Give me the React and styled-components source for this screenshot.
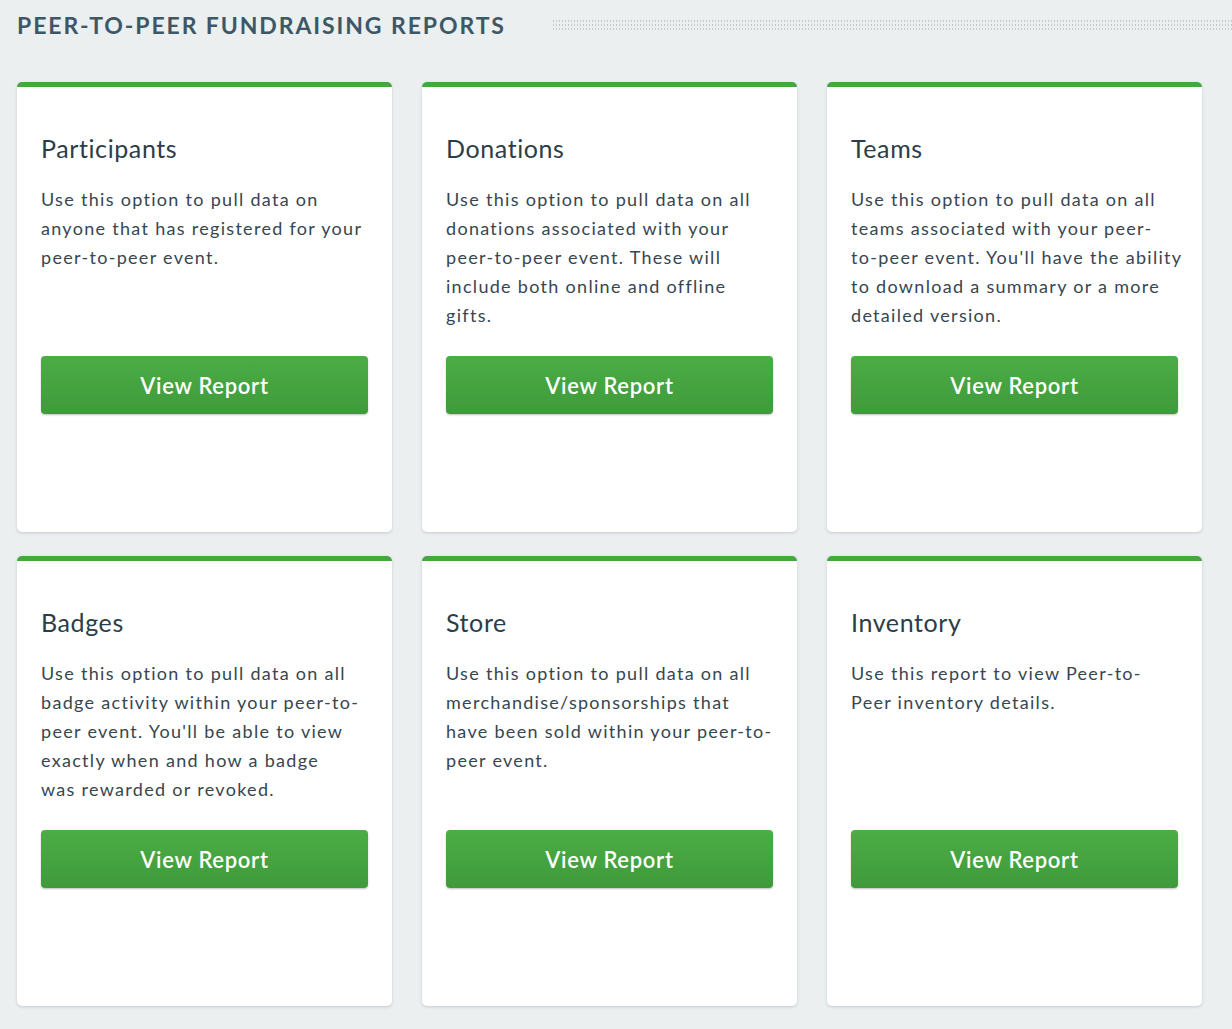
import React from 'react';
import styled, { createGlobalStyle } from 'styled-components';

const GlobalStyle = createGlobalStyle`
  html, body {
    margin: 0;
    padding: 0;
    background: #ebeff0;
  }
  body {
    font-family: 'Lato', 'Open Sans', sans-serif;
  }
`;

const Page = styled.div`
  padding: 0 0 23px 17px;
  width: 1232px;
  box-sizing: border-box;
  overflow: hidden;
`;

const Header = styled.div`
  display: flex;
  align-items: center;
  height: 50px;
  margin-bottom: 32px;
`;

const HeaderTitle = styled.h1`
  margin: 0;
  font-size: 23px;
  font-weight: 700;
  letter-spacing: 1.9px;
  color: #3e5767;
  white-space: nowrap;
`;

const Dots = styled.div`
  flex: 1;
  height: 12px;
  margin-left: 46px;
  background-image: radial-gradient(circle, #c3c9cc 0.9px, transparent 1.1px);
  background-size: 3px 4px;
`;

const Grid = styled.div`
  display: grid;
  grid-template-columns: repeat(3, 375px);
  column-gap: 30px;
  row-gap: 24px;
`;

const Card = styled.div`
  height: 450px;
  box-sizing: border-box;
  background: #fff;
  border-top: 5px solid #45a83f;
  border-radius: 5px;
  box-shadow: 0 1px 3px rgba(60, 75, 85, 0.22);
  padding: 46px 24px 0 24px;
  display: flex;
  flex-direction: column;
`;

const Title = styled.h2`
  margin: 0;
  font-size: 25px;
  line-height: 30px;
  font-weight: 400;
  letter-spacing: 0.6px;
  color: #2b3d48;
`;

const Description = styled.p`
  margin: 22px -4px 0 0;
  font-size: 18px;
  line-height: 29px;
  color: #37464f;
  min-height: 145px;
  letter-spacing: 1.3px;
`;

const Button = styled.button`
  margin-top: 26px;
  height: 58px;
  width: 327px;
  border: none;
  border-radius: 4px;
  background: linear-gradient(to bottom, #4bad45, #3f9a3b);
  box-shadow: 0 1px 2px rgba(0, 0, 0, 0.25);
  color: #fff;
  font-family: inherit;
  font-size: 22px;
  font-weight: 600;
  letter-spacing: 0.7px;
  cursor: pointer;
`;

const reports = [
  {
    title: 'Participants',
    text: 'Use this option to pull data on anyone that has registered for your peer-to-peer event.',
  },
  {
    title: 'Donations',
    text: 'Use this option to pull data on all donations associated with your peer-to-peer event. These will include both online and offline gifts.',
  },
  {
    title: 'Teams',
    text: "Use this option to pull data on all teams associated with your peer-to\u2011peer event. You'll have the ability to download a summary or a more detailed version.",
  },
  {
    title: 'Badges',
    text: "Use this option to pull data on all badge activity within your peer-to-peer event. You'll be able to view exactly when and how a badge was\u00a0rewarded or revoked.",
  },
  {
    title: 'Store',
    text: 'Use this option to pull data on all merchandise/sponsorships that have been sold within your peer-to-peer event.',
  },
  {
    title: 'Inventory',
    text: 'Use this report to view Peer-to-Peer inventory details.',
  },
];

const App = () => {
  return (
    <Page>
      <GlobalStyle />
      <Header>
        <HeaderTitle>PEER-TO-PEER FUNDRAISING REPORTS</HeaderTitle>
        <Dots />
      </Header>
      <Grid>
        {reports.map((report, index) => (
          <Card key={index}>
            <Title>{report.title}</Title>
            <Description>{report.text}</Description>
            <Button>View Report</Button>
          </Card>
        ))}
      </Grid>
    </Page>
  );
};

export default App;
